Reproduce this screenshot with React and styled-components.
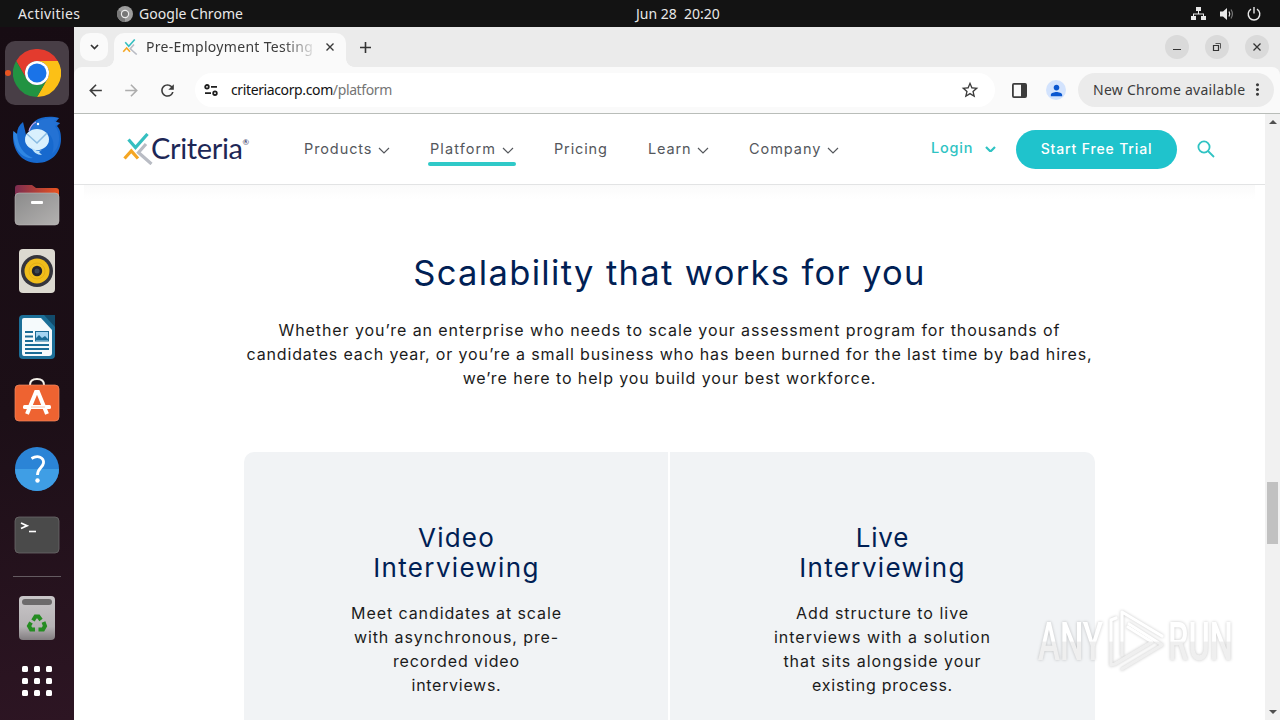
import React from "react";
import styled, { createGlobalStyle } from "styled-components";
import {
  MdArrowBack,
  MdArrowForward,
  MdRefresh,
  MdStarBorder,
  MdPerson,
  MdMoreVert,
} from "react-icons/md";

const GlobalStyle = createGlobalStyle`
  * {
    box-sizing: border-box;
  }

  body {
    margin: 0;
    overflow: hidden;
  }

  svg {
    display: block;
    flex-shrink: 0;
  }
`;

const Desktop = styled.div`
  position: relative;
  display: flex;
  flex-direction: column;
  width: 1280px;
  height: 720px;
  overflow: hidden;
  font-family: "Noto Sans", "Open Sans", sans-serif;
`;

/* ---------- top bar ---------- */

const TopBar = styled.div`
  display: grid;
  grid-template-columns: 117px 519px 1fr auto;
  align-items: center;
  height: 27px;
  padding-right: 19px;
  background: #131313;
  color: #e8e8e8;
  font-size: 14px;
`;

const TopText = styled.span`
  padding-left: ${(p) => p.$pad || 0}px;
  letter-spacing: ${(p) => p.$ls || 0}px;
  white-space: pre;
`;

const TopApp = styled.div`
  display: flex;
  align-items: center;
  gap: 6px;
`;

const Tray = styled.div`
  display: flex;
  align-items: center;
  gap: 13px;
`;

const Body = styled.div`
  display: flex;
  height: 693px;
`;

/* ---------- dock ---------- */

const Dock = styled.div`
  display: flex;
  flex-direction: column;
  align-items: center;
  width: 74px;
  padding-top: 13px;
  background: linear-gradient(170deg, #170c13 0%, #1c0f17 55%, #2d1523 100%);
`;

const DockItem = styled.div`
  display: flex;
  align-items: center;
  justify-content: center;
  width: 74px;
  height: ${(p) => p.$h || 66}px;
`;

const DockActive = styled.div`
  position: relative;
  display: flex;
  align-items: center;
  justify-content: center;
  width: 64px;
  height: 64px;
  border-radius: 10px;
  background: #483e46;
`;

const RunningDot = styled.span`
  position: absolute;
  left: 0;
  top: 29px;
  width: 6px;
  height: 6px;
  border-radius: 50%;
  background: #e95420;
`;

const DockLine = styled.div`
  width: 48px;
  height: 1px;
  margin: 8px 0;
  background: #645b61;
`;

/* ---------- browser ---------- */

const Browser = styled.div`
  display: flex;
  flex-direction: column;
  width: 1206px;
  background: #ebebeb;
`;

const TabStrip = styled.div`
  display: flex;
  align-items: flex-start;
  height: 40px;
  padding: 6px 11px 0 6px;
`;

const TabSearch = styled.div`
  display: flex;
  align-items: center;
  justify-content: center;
  width: 28px;
  height: 28px;
  margin-right: 6px;
  border-radius: 10px;
  background: #fafafa;
`;

const Tab = styled.div`
  position: relative;
  display: flex;
  align-items: center;
  width: 232px;
  height: 34px;
  padding: 0 11px 6px 8px;
  border-radius: 10px 10px 0 0;
  background: #fafafa;

  &::before,
  &::after {
    content: "";
    position: absolute;
    bottom: 0;
    width: 8px;
    height: 8px;
  }
  &::before {
    left: -8px;
    background: radial-gradient(circle at 0 0, transparent 7.5px, #fafafa 8px);
  }
  &::after {
    right: -8px;
    background: radial-gradient(circle at 100% 0, transparent 7.5px, #fafafa 8px);
  }
`;

const TabTitle = styled.span`
  width: 168px;
  margin: -2px 12px 0 8px;
  overflow: hidden;
  white-space: nowrap;
  font-size: 14px;
  letter-spacing: 0.3px;
  color: #3c3c3c;
  mask-image: linear-gradient(90deg, #000 82%, transparent 102%);
`;

const NewTab = styled.div`
  display: flex;
  align-items: center;
  justify-content: center;
  width: 39px;
  height: 28px;
`;

const WindowButtons = styled.div`
  display: flex;
  gap: 16px;
  margin: 2px 0 0 auto;
`;

const WindowButton = styled.div`
  width: 24px;
  height: 24px;
  border-radius: 50%;
  background: #dadada;
`;

const Toolbar = styled.div`
  display: flex;
  align-items: center;
  height: 47px;
  padding: 0 6px 0 12px;
  border-bottom: 1px solid #b9bdb9;
  border-radius: 8px 8px 0 0;
  background: #fafafa;
  color: #3c3c3c;
`;

const NavButtons = styled.div`
  display: flex;
  align-items: center;
  gap: 17px;
  width: 109px;
`;

const Omnibox = styled.div`
  display: flex;
  align-items: center;
  width: 800px;
  height: 34px;
  padding: 0 15px 0 9px;
  border-radius: 17px;
  background: #fff;
`;

const Url = styled.span`
  flex: 1;
  margin: -2px 0 0 13px;
  font-size: 14px;
  letter-spacing: ${(p) => p.$ls}px;
  color: #111;

  span {
    color: #757575;
  }
`;

const SidePanelIcon = styled.svg`
  margin-left: 17px;
`;

const Avatar = styled.div`
  display: flex;
  align-items: center;
  justify-content: center;
  width: 20px;
  height: 20px;
  margin: 0 12px 0 19px;
  border-radius: 50%;
  background: #d3e3fd;
  color: #0b57d0;
`;

const UpdatePill = styled.div`
  display: flex;
  align-items: center;
  justify-content: space-between;
  width: 196px;
  height: 34px;
  padding: 0 7px 1px 15px;
  border-radius: 17px;
  background: #ebebeb;
  font-size: 14px;
  white-space: nowrap;
  letter-spacing: 0.27px;
`;

/* ---------- page ---------- */

const Viewport = styled.div`
  display: flex;
  height: 606px;
  background: #fff;
  font-family: Inter, "Liberation Sans", sans-serif;
`;

const Page = styled.div`
  width: 1191px;
  overflow: hidden;
`;

const Scrollbar = styled.div`
  display: flex;
  flex-direction: column;
  align-items: center;
  width: 15px;
  padding: 6px 0 6px;
  background: #f1f1f1;
`;

const Thumb = styled.div`
  width: 11px;
  height: 62px;
  margin: 358px 0 auto;
  background: #c1c1c1;
`;

const SiteHeader = styled.header`
  display: flex;
  align-items: center;
  height: 71px;
  padding: 0 49px 0 49px;
  border-bottom: 1px solid #e2e3e4;
`;

const HeaderShade = styled.div`
  height: 14px;
  margin: 0 10px;
  background: linear-gradient(#fafafa, #fff);
`;

const Logo = styled.div`
  display: flex;
  align-items: center;
  width: 181px;
`;

const LogoText = styled.span`
  margin: -2px 0 0 -2px;
  font: 400 29px/36px Lato, sans-serif;
  letter-spacing: ${(p) => p.$ls}px;
  color: #1d2756;
`;

const LogoMark = styled.sup`
  align-self: flex-start;
  margin-top: 6px;
  font: 8px/8px Lato, sans-serif;
  color: #1d2756;
`;

const Menu = styled.nav`
  display: flex;
  width: 627px;
`;

const MenuItem = styled.div`
  display: flex;
  align-items: center;
  width: ${(p) => p.$w}px;
  font-size: 14.5px;
  letter-spacing: ${(p) => p.$ls}px;
  color: #54575c;
`;

const MenuLink = styled.div`
  position: relative;
  display: flex;
  align-items: center;
  height: 32px;

  svg {
    margin-top: 3px;
  }

  &::after {
    content: "";
    display: ${(p) => (p.$active ? "block" : "none")};
    position: absolute;
    left: -2px;
    right: -2px;
    bottom: -1px;
    height: 4px;
    border-radius: 2px;
    background: #2fc9c8;
  }
`;

const MenuLabel = styled.span`
  width: ${(p) => p.$w}px;
  padding-bottom: 2px;
  white-space: nowrap;
`;

const Login = styled.div`
  display: flex;
  align-items: center;
  width: 85px;
  font-size: 14.5px;
  font-weight: 500;
  letter-spacing: 0.8px;
  color: #2fc3c3;
`;

const LoginLabel = styled.span`
  width: 54px;
  padding-bottom: 3px;
`;

const TrialButton = styled.button`
  width: 161px;
  height: 39px;
  margin-right: 20px;
  padding: 0 0 1px;
  border: 0;
  border-radius: 20px;
  background: #1fc3cc;
  color: #fff;
  font: 500 14px Inter, sans-serif;
  letter-spacing: ${(p) => p.$ls}px;
`;

const Section = styled.section`
  display: flex;
  flex-direction: column;
  align-items: center;
  padding-top: 52px;
  text-align: center;
  white-space: nowrap;
`;

const Title = styled.h2`
  margin: 0;
  font-size: 34.5px;
  font-weight: 400;
  line-height: 44px;
  letter-spacing: ${(p) => p.$ls}px;
  color: #002054;
`;

const Lead = styled.div`
  margin: 23px 0 62px;
`;

const Line = styled.div`
  font-size: 16px;
  line-height: 24px;
  letter-spacing: ${(p) => p.$ls}px;
  color: #1b1b1b;
`;

const Cards = styled.div`
  display: grid;
  grid-template-columns: 424px 425px;
  gap: 2px;
  height: 300px;
`;

const Card = styled.article`
  padding: 71px 0 0;
  padding-left: ${(p) => (p.$right ? 0 : 1)}px;
  border-radius: ${(p) => (p.$right ? "0 10px 0 0" : "10px 0 0 0")};
  background: #f1f3f5;
`;

const CardTitle = styled.h3`
  margin: 0 0 18px;
  font-size: 26px;
  font-weight: 400;
  line-height: 30px;
  color: #002054;
`;

const TitleLine = styled.div`
  letter-spacing: ${(p) => p.$ls}px;
`;

const Watermark = styled.div`
  position: absolute;
  left: 1030px;
  top: 600px;
`;

const menu = [
  { label: "Products", slot: 126, text: 74, ls: 0.9, arrow: true },
  { label: "Platform", slot: 124, text: 72, ls: 1.1, arrow: true, active: true },
  { label: "Pricing", slot: 94, text: 60, ls: 0.85 },
  { label: "Learn", slot: 101, text: 49, ls: 0.85, arrow: true },
  { label: "Company", slot: 120, text: 78, ls: 0.95, arrow: true },
];

const lead = [
  { text: "Whether you’re an enterprise who needs to scale your assessment program for thousands of", ls: 0.907 },
  { text: "candidates each year, or you’re a small business who has been burned for the last time by bad hires,", ls: 0.864 },
  { text: "we’re here to help you build your best workforce.", ls: 0.89 },
];

const cards = [
  {
    title: [
      { text: "Video", ls: 1.2 },
      { text: "Interviewing", ls: 1.34 },
    ],
    lines: [
      { text: "Meet candidates at scale", ls: 0.91 },
      { text: "with asynchronous, pre-", ls: 0.91 },
      { text: "recorded video", ls: 0.9 },
      { text: "interviews.", ls: 0.7 },
    ],
  },
  {
    title: [
      { text: "Live", ls: 0.8 },
      { text: "Interviewing", ls: 1.34 },
    ],
    lines: [
      { text: "Add structure to live", ls: 0.98 },
      { text: "interviews with a solution", ls: 1 },
      { text: "that sits alongside your", ls: 0.96 },
      { text: "existing process.", ls: 0.76 },
    ],
  },
];

const Chevron = ({ w = 11, h = 6, stroke = 1.2, color = "currentColor" }) => (
  <svg width={w + 2} height={h + 2} viewBox={`-1 -1 ${w + 2} ${h + 2}`} fill="none">
    <path d={`M0 0L${w / 2} ${h}L${w} 0`} stroke={color} strokeWidth={stroke} />
  </svg>
);

const CriteriaMark = ({ w, h }) => (
  <svg width={w} height={h} viewBox="0 0 30 32" fill="none" strokeWidth="3.2">
    <path d="M23 11L15.500 19.500L28.500 31" stroke="#b9bcc4" />
    <path d="M5.500 6.500L12.500 14.500L24.500 1" stroke="#35bfc0" />
    <path d="M1.500 25.500L8.300 18L15 25.500" stroke="#f5a623" />
  </svg>
);

const ChromeIcon = () => (
  <svg width="48" height="48" viewBox="9 9 48 48">
    <path d="M12.2 21A24 24 0 0 1 53.8 21L33 21A12 12 0 0 0 22.6 39Z" fill="#e33b2e" />
    <path d="M53.8 21A24 24 0 0 1 33 57L43.4 39A12 12 0 0 0 33 21Z" fill="#fcc016" />
    <path d="M33 57A24 24 0 0 1 12.2 21L22.6 39A12 12 0 0 0 43.4 39Z" fill="#229342" />
    <circle cx="33" cy="33" r="12" fill="#fff" />
    <circle cx="33" cy="33" r="9.5" fill="#1a73e8" />
  </svg>
);

const ThunderbirdIcon = () => (
  <svg width="50" height="50" viewBox="0 -1 50 50">
    <path d="M11 7C7 10 5 14 5 19C3 18 2 17 1.5 16C-1 30 6 48 25 48C40 48 49 37 49 24C49 18 48 14 45 11L48 8L43 8L47 3C40 1 29 1 23 6C19 9 18 13 17 16L14 20C13 15 12 11 11 7Z" fill="#1769ce" />
    <path d="M21 11C27 3 38 2 47 3L42 6L48 8L43 11C49 18 49 32 40 39C44 28 40 18 31 15C27 13 22 15 17 16Z" fill="#2472d4" />
    <path d="M5 19C6 31 11 39 21 43C14 44 7 39 4 32C2 27 1 21 1.5 16Z" fill="#2f86e2" />
    <path d="M17 16C18 12 20 9 24 7" fill="none" stroke="#c3a3e0" strokeWidth="1.2" />
    <ellipse cx="25" cy="24.5" rx="12" ry="10.5" fill="#d9f0fd" />
    <path d="M15 19L25 28L35 18" fill="none" stroke="#8abce2" strokeWidth="1.5" />
    <path d="M19 32C23 36 28 37 31 34L27 37L30 40C25 40 21 37 19 32Z" fill="#bfe4fb" />
    <circle cx="26" cy="9" r="1.2" fill="#fff" />
  </svg>
);

const FilesIcon = () => (
  <svg width="46" height="42" viewBox="0 0 46 42">
    <defs>
      <linearGradient id="folder">
        <stop offset="0" stopColor="#7b2c50" />
        <stop offset="1" stopColor="#e95420" />
      </linearGradient>
      <linearGradient id="drawer" x1="0" x2="1" y2="1">
        <stop offset="0" stopColor="#8b8b8b" />
        <stop offset="1" stopColor="#b3b1b0" />
      </linearGradient>
    </defs>
    <path d="M1 4Q1 1 4 1H18L22 4H42Q45 4 45 7V20H1Z" fill="url(#folder)" />
    <rect x="1" y="9" width="44" height="32" rx="4" fill="url(#drawer)" stroke="#bdbaba" strokeWidth=".6" />
    <rect x="17" y="17" width="12" height="3" rx="1" fill="#fff" />
  </svg>
);

const RhythmboxIcon = () => (
  <svg width="38" height="46" viewBox="0 0 38 46">
    <rect x="1" y="1" width="36" height="44" rx="4" fill="#dcd9d0" />
    <circle cx="19" cy="23" r="16" fill="#35353d" />
    <circle cx="19" cy="23" r="12.500" fill="#f0bd1b" />
    <circle cx="19" cy="23" r="8" fill="none" stroke="#e3af15" />
    <circle cx="19" cy="23" r="5.2" fill="#24242b" />
    <circle cx="19" cy="23" r="2.5" fill="#3c4654" />
  </svg>
);

const WriterIcon = () => (
  <svg width="38" height="46" viewBox="0 0 38 46">
    <path d="M5 1H37V41Q37 45 33 45H5Q1 45 1 41V5Q1 1 5 1Z" fill="#1c6f98" />
    <path d="M26 1H37V13Z" fill="#124b6b" />
    <path d="M6 4H23L34 16V39Q34 42 31 42H6Q4 42 4 39V6Q4 4 6 4Z" fill="#f5fafc" />
    <path d="M7 18H15M7 22.5H15M7 27H15M7 31H31M7 35H31M7 39H24" stroke="#1a6c96" strokeWidth="2" />
    <rect x="17.5" y="17.5" width="13" height="9.5" fill="#a4d5f2" stroke="#1a6c96" />
    <path d="M18 26V24L21 21L24 24L27 22L30 25V26Z" fill="#1a6c96" />
  </svg>
);

const SoftwareIcon = () => (
  <svg width="46" height="52" viewBox="0 0 46 52">
    <path d="M16 10V8Q16 2 23 2Q30 2 30 8V10" fill="none" stroke="#f3efe8" strokeWidth="2" />
    <rect x="1" y="8" width="44" height="36" rx="4" fill="#ee6331" stroke="#f28a62" strokeWidth=".7" />
    <path d="M13 37L22 15H24L33 37" fill="none" stroke="#fff" strokeWidth="4" />
    <rect x="9" y="28" width="28" height="4" rx="1.5" fill="#fff" />
    <path d="M17 30H31" stroke="#f5b79d" strokeWidth=".8" />
  </svg>
);

const HelpIcon = () => (
  <svg width="46" height="46" viewBox="0 0 46 46">
    <circle cx="23" cy="23" r="22" fill="#2b84d6" />
    <path d="M1 23A22 22 0 0 0 45 23Z" fill="#3f9ee5" />
    <path d="M17.500 12.500C24 8.500 30 11.500 29.500 17C29 21.500 23.500 22 23.500 29" fill="none" stroke="#fff" strokeWidth="2.800" />
    <circle cx="23.500" cy="34.500" r="2.200" fill="#fff" />
  </svg>
);

const TerminalIcon = () => (
  <svg width="46" height="38" viewBox="0 0 46 38">
    <rect x="1" y="1" width="44" height="36" rx="4" fill="#4a4a4a" stroke="#6b686a" strokeWidth=".8" />
    <path d="M7 7L13 9.7L7 12.5" fill="none" stroke="#fff" strokeWidth="1.8" />
    <path d="M15 15.5H22" stroke="#fff" strokeWidth="1.6" />
  </svg>
);

const TrashIcon = () => (
  <svg width="38" height="46" viewBox="0 0 38 46">
    <defs>
      <linearGradient id="bin" x2="0" y2="1">
        <stop offset="0" stopColor="#c9c6c8" />
        <stop offset=".7" stopColor="#b5b2b4" />
        <stop offset="1" stopColor="#827d80" />
      </linearGradient>
    </defs>
    <rect x="1" y="1" width="36" height="44" rx="4" fill="url(#bin)" />
    <rect x="4" y="4" width="30" height="6" rx="3" fill="#6c6a6b" />
    <g fill="none" stroke="#258c22" strokeWidth="4">
      <path d="M15 25.5L17.5 21.5H20.5L23 25" />
      <path d="M25.5 27L27 31L25 34.5H20.5" />
      <path d="M17 34.5H13L11 31L13 27.5" />
    </g>
  </svg>
);

const AppsIcon = () => (
  <svg width="30" height="30" viewBox="0 0 30 30" fill="#fff">
    {[0, 12, 24].map((y) =>
      [0, 12, 24].map((x) => <rect key={`${x}-${y}`} x={x} y={y} width="6" height="6" rx="1.5" />)
    )}
  </svg>
);

const NetworkIcon = () => (
  <svg width="15" height="14" viewBox="0 0 15 14" fill="#e8e8e8">
    <path d="M5 0h5v4H8v2.5h5V9h2v4h-5V9h2V7.5H3V9h2v4H0V9h2V6.500h5V4H5Z" />
  </svg>
);

const VolumeIcon = () => (
  <svg width="15" height="14" viewBox="0 0 15 14" fill="none" stroke="#e8e8e8">
    <path d="M1 4.500H4L8 1V13L4 9.500H1Z" fill="#e8e8e8" stroke="none" />
    <path d="M10 4.500Q11.500 7 10 9.500" strokeWidth="1.200" />
    <path d="M12 2.500Q14.800 7 12 11.500" strokeWidth="1.200" stroke="#777" />
  </svg>
);

const PowerIcon = () => (
  <svg width="14" height="14" viewBox="0 0 14 14" fill="none" stroke="#e8e8e8" strokeWidth="1.4">
    <path d="M4 2.200A5.800 5.800 0 1 0 10 2.200M7 0V6.500" />
  </svg>
);

const ChromeGrey = () => (
  <svg width="16" height="16" viewBox="0 0 16 16">
    <circle cx="8" cy="8" r="8" fill="#9d9d9d" />
    <path d="M8 8L1 4A8 8 0 0 0 8 16Z" fill="#777" />
    <circle cx="8" cy="8" r="4.200" fill="#ededed" />
    <circle cx="8" cy="8" r="3" fill="#777" />
  </svg>
);

const TuneIcon = () => (
  <svg width="14" height="12" viewBox="0 0 14 12" fill="none" stroke="#1f1f1f" strokeWidth="1.8">
    <circle cx="3" cy="2.800" r="1.800" />
    <path d="M7 2.800H13M1 9.200H7" />
    <circle cx="11" cy="9.200" r="1.800" />
  </svg>
);

const Cross = ({ size }) => (
  <svg width={size} height={size} viewBox="0 0 8 8" stroke="#3a3a3a" strokeWidth="1.4">
    <path d="M.5 .5L7.500 7.500M7.500 .5L.5 7.500" />
  </svg>
);

const WatermarkArt = styled.svg`
  filter: drop-shadow(0 0 1.5px rgba(0, 0, 0, 0.22));
`;

const AnyRun = () => (
  <WatermarkArt width="240" height="90" viewBox="0 0 240 90">
    <defs>
      <linearGradient id="shine" gradientUnits="userSpaceOnUse" x1="0" y1="10" x2="0" y2="72">
        <stop offset=".5" stopColor="#fff" />
        <stop offset=".52" stopColor="#efefef" />
      </linearGradient>
    </defs>
    <g fill="url(#shine)" fontFamily="Roboto, sans-serif" fontSize="53" fontWeight="500">
      <text x="8" y="60" textLength="65" lengthAdjust="spacingAndGlyphs">ANY</text>
      <text x="138" y="60" textLength="65" lengthAdjust="spacingAndGlyphs">RUN</text>
    </g>
    <g fill="none" stroke="url(#shine)" strokeWidth="3.200" strokeLinejoin="round" strokeLinecap="round">
      <path d="M86 18L81 20V65L85 64L122 42L98 27" />
      <path d="M92 55V12L132 36" />
      <path d="M92 69L132 45L99 24" />
    </g>
  </WatermarkArt>
);

const dock = [
  ThunderbirdIcon,
  FilesIcon,
  RhythmboxIcon,
  WriterIcon,
  SoftwareIcon,
  HelpIcon,
  TerminalIcon,
];

const WindowControls = () => (
  <WindowButtons>
    <WindowButton>
      <svg width="24" height="24"><path d="M8 14.500H16" stroke="#333" /></svg>
    </WindowButton>
    <WindowButton>
      <svg width="24" height="24" fill="none" stroke="#333">
        <path d="M8.500 10.500H13.500V15.500H8.500Z" strokeWidth="1.200" />
        <path d="M10.500 8.500H15.500V13.500" strokeWidth=".8" />
      </svg>
    </WindowButton>
    <WindowButton>
      <svg width="24" height="24"><path d="M8.500 8.500L15.500 15.500M15.500 8.500L8.500 15.500" stroke="#333" strokeWidth="1.300" /></svg>
    </WindowButton>
  </WindowButtons>
);

const BrowserChrome = () => (
  <>
    <TabStrip>
      <TabSearch>
        <Chevron w={7} h={3.5} stroke={1.7} color="#333" />
      </TabSearch>
      <Tab>
        <CriteriaMark w={16} h={16} />
        <TabTitle>Pre-Employment Testing</TabTitle>
        <Cross size={8} />
      </Tab>
      <NewTab>
        <svg width="11" height="11" stroke="#333" strokeWidth="1.6">
          <path d="M5.500 0V11M0 5.500H11" />
        </svg>
      </NewTab>
      <WindowControls />
    </TabStrip>
    <Toolbar>
      <NavButtons>
        <MdArrowBack size={19} />
        <MdArrowForward size={19} color="#adadad" />
        <MdRefresh size={19} />
      </NavButtons>
      <Omnibox>
        <TuneIcon />
        <Url $ls={-0.38}>
          criteriacorp.com<span>/platform</span>
        </Url>
        <MdStarBorder size={20} />
      </Omnibox>
      <SidePanelIcon width="15" height="15" viewBox="0 0 15 15">
        <rect x=".9" y=".9" width="13.200" height="13.200" rx="1" fill="none" stroke="#3c3c3c" strokeWidth="1.800" />
        <path d="M9 1H14V14H9Z" fill="#3c3c3c" />
      </SidePanelIcon>
      <Avatar>
        <MdPerson size={17} />
      </Avatar>
      <UpdatePill>
        New Chrome available
        <MdMoreVert size={19} />
      </UpdatePill>
    </Toolbar>
  </>
);

const Header = () => (
  <SiteHeader>
    <Logo>
      <CriteriaMark w={30} h={32} />
      <LogoText $ls={-0.35}>Criteria</LogoText>
      <LogoMark>®</LogoMark>
    </Logo>
    <Menu>
      {menu.map((item) => (
        <MenuItem key={item.label} $w={item.slot} $ls={item.ls}>
          <MenuLink $active={item.active}>
            <MenuLabel $w={item.text}>{item.label}</MenuLabel>
            {item.arrow && <Chevron w={10} h={5} />}
          </MenuLink>
        </MenuItem>
      ))}
    </Menu>
    <Login>
      <LoginLabel>Login</LoginLabel>
      <Chevron w={9} h={4.5} stroke={2.2} />
    </Login>
    <TrialButton $ls={0.85}>Start Free Trial</TrialButton>
    <svg width="18" height="18" fill="none" stroke="#2fc3c3" strokeWidth="1.800">
      <circle cx="7" cy="7" r="5.600" />
      <path d="M11 11L17 17" />
    </svg>
  </SiteHeader>
);

export default () => {
  return (
    <Desktop>
      <GlobalStyle />
      <TopBar>
        <TopText $pad={18} $ls={0.4}>Activities</TopText>
        <TopApp>
          <ChromeGrey />
          <TopText $ls={0.05}>Google Chrome</TopText>
        </TopApp>
        <TopText>Jun 28  20:20</TopText>
        <Tray>
          <NetworkIcon />
          <VolumeIcon />
          <PowerIcon />
        </Tray>
      </TopBar>
      <Body>
        <Dock>
          <DockItem>
            <DockActive>
              <RunningDot />
              <ChromeIcon />
            </DockActive>
          </DockItem>
          {dock.map((Icon, i) => (
            <DockItem key={i}>
              <Icon />
            </DockItem>
          ))}
          <DockLine />
          <DockItem>
            <TrashIcon />
          </DockItem>
          <DockItem $h={60}>
            <AppsIcon />
          </DockItem>
        </Dock>
        <Browser>
          <BrowserChrome />
          <Viewport>
            <Page>
              <Header />
              <HeaderShade />
              <Section>
                <Title $ls={1.35}>Scalability that works for you</Title>
                <Lead>
                  {lead.map((l) => (
                    <Line key={l.text} $ls={l.ls}>{l.text}</Line>
                  ))}
                </Lead>
                <Cards>
                  {cards.map((card, i) => (
                    <Card key={i} $right={i === 1}>
                      <CardTitle>
                        {card.title.map((t) => (
                          <TitleLine key={t.text} $ls={t.ls}>{t.text}</TitleLine>
                        ))}
                      </CardTitle>
                      {card.lines.map((l) => (
                        <Line key={l.text} $ls={l.ls}>{l.text}</Line>
                      ))}
                    </Card>
                  ))}
                </Cards>
              </Section>
            </Page>
            <Scrollbar>
              <svg width="8" height="4" fill="#505050"><path d="M0 4L4 0L8 4Z" /></svg>
              <Thumb />
              <svg width="8" height="4" fill="#505050"><path d="M0 0L4 4L8 0Z" /></svg>
            </Scrollbar>
          </Viewport>
        </Browser>
      </Body>
      <Watermark>
        <AnyRun />
      </Watermark>
    </Desktop>
  );
};
